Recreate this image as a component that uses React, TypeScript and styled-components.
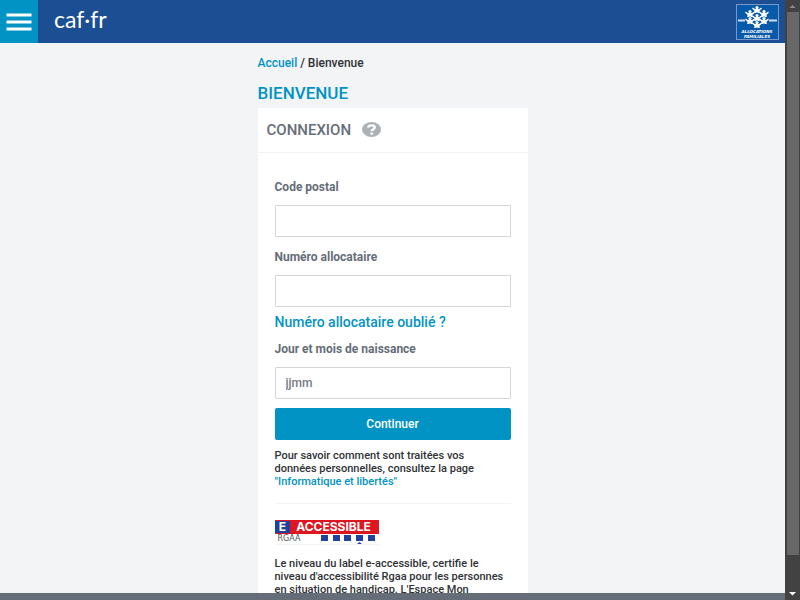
import React from "react";
import styled, { createGlobalStyle } from "styled-components";

const GlobalStyle = createGlobalStyle`
  *, *::before, *::after { box-sizing: border-box; }
  body { margin: 0; background: #f2f4f6; font-family: Roboto, "Liberation Sans", sans-serif; color: #2f3236; }
  h1, h2, p { margin: 0; }
  a { color: #0093c4; text-decoration: none; }
`;

const Shell = styled.div`
  display: grid;
  grid-template-columns: minmax(0, 1fr) 15px;
  height: 100vh;
`;

const Viewport = styled.div`
  display: flex;
  flex-direction: column;
  min-height: 0;
`;

const Header = styled.header`
  display: flex;
  flex: none;
  align-items: center;
  height: 43px;
  background: #1c4e93;
`;

const MenuButton = styled.button`
  display: flex;
  align-items: center;
  justify-content: center;
  width: 38px;
  height: 43px;
  padding: 0;
  border: 0;
  background: #0093c4;
`;

const Brand = styled.a`
  margin: 0 auto 5px 16px;
  color: #fff;
  font-family: Lato, sans-serif;
  font-size: 23px;
  line-height: 28px;
`;

const FamilyLogo = styled.svg`
  display: block;
  margin-right: 6px;
`;

const Content = styled.main`
  flex: 1;
  min-height: 0;
  overflow: hidden;
`;

const Column = styled.div`
  width: 100%;
  max-width: 270px;
  margin: 0 auto;
`;

const Breadcrumb = styled.nav`
  padding-top: 12px;
  font-size: 12px;
  font-weight: 500;
  line-height: 16px;
`;

const PageTitle = styled.h1`
  padding: 12px 0 5px;
  color: #0093c4;
  font-size: 17px;
  font-weight: 500;
  line-height: 20px;
`;

const Card = styled.section`
  background: #fff;
`;

const CardHeader = styled.div`
  display: flex;
  align-items: center;
  gap: 11px;
  height: 45px;
  padding: 0 9px;
  border-bottom: 1px solid #f2f4f6;
`;

const CardTitle = styled.h2`
  color: #656d78;
  font-size: 15px;
  font-weight: 500;
  line-height: 20px;
`;

const HelpButton = styled.button`
  display: flex;
  padding: 0;
  border: 0;
  background: none;
`;

const Form = styled.form`
  display: flex;
  flex-direction: column;
  padding: 26px 17px 0;
`;

const Field = styled.div`
  display: flex;
  flex-direction: column;
  gap: 10px;
  margin-bottom: 12px;
`;

const Label = styled.label`
  color: #656d78;
  font-size: 12px;
  font-weight: 700;
  line-height: 16px;
`;

const Input = styled.input`
  width: 100%;
  height: 32px;
  padding: 0 10px;
  border: 1px solid #d3d7da;
  border-radius: 1px;
  background: #fff;
  font-family: inherit;
  font-size: 12px;
  font-weight: 500;
  &::placeholder { color: #777c82; opacity: 1; }
`;

const ForgotLink = styled.a`
  margin: -5px 0 11px;
  font-size: 14px;
  font-weight: 500;
  line-height: 16px;
`;

const Submit = styled.button`
  height: 32px;
  margin-top: -3px;
  border: 0;
  border-radius: 2px;
  background: #0093c4;
  color: #fff;
  font-family: inherit;
  font-size: 12px;
  font-weight: 500;
`;

const Note = styled.p`
  font-size: 11px;
  font-weight: 500;
  line-height: 13px;
`;

const Legal = styled.div`
  margin: 0 17px;
  padding: 9px 0 15px;
  border-bottom: 1px solid #f2f4f6;
`;

const Accessibility = styled.div`
  display: flex;
  flex-direction: column;
  gap: 12px;
  padding: 16px 17px;
`;

const Badge = styled.div`
  width: 104px;
  border-bottom: 1px solid #f2f4f6;
`;

const BadgeTop = styled.div`
  display: flex;
  height: 14px;
  border: 1px solid #dc1721;
  border-left-color: #20429c;
  border-radius: 1px;
  overflow: hidden;
  color: #fff;
  font-family: Inter, sans-serif;
  font-size: 12px;
  font-weight: 700;
  line-height: 12px;
`;

const BadgeLetter = styled.span`
  width: 14px;
  background: #20429c;
  text-align: center;
`;

const BadgeWord = styled.span`
  flex: 1;
  background: #dc1721;
  text-align: center;
`;

const BadgeBottom = styled.div`
  display: flex;
  align-items: center;
  justify-content: space-between;
  height: 10px;
  padding: 0 3px;
  color: #50545a;
  font-family: "DejaVu Sans", sans-serif;
  font-size: 8px;
  line-height: 10px;
`;

const BottomBar = styled.footer`
  flex: none;
  height: 7px;
  background: #656d78;
`;

const Scrollbar = styled.div`
  display: flex;
  flex-direction: column;
  align-items: center;
  background: #424242;
`;

const Arrow = styled.svg`
  display: block;
  flex: none;
`;

const Thumb = styled.div`
  flex: 543 1 0;
  width: 12px;
  background: #686868;
`;

const Track = styled.div`
  flex: 33 1 0;
`;

const people = [
  [21, 2], [14, 6], [28, 6], [21, 10], [14, 13], [28, 13], [21, 17],
];

const Family = () => (
  <FamilyLogo width="43" height="36" viewBox="0 0 43 36" role="img" aria-label="Allocations familiales">
    <rect x="0.5" y="0.5" width="42" height="35" fill="#0759a9" stroke="#7899c5" />
    <path d="M2 16.5H9M33 16.5H41" stroke="#d6dcf3" strokeWidth="2" />
    {people.map(([x, y]) => (
      <g key={`${x}-${y}`} transform={`translate(${x} ${y})`} fill="#fff">
        <circle cx="0" cy="1.5" r="1.6" />
        <path d="M-4.4 1.4L-2 3H2L4.4 1.4L4.8 2.8L2.5 4.8L2.8 7H0.8L0 6L-0.8 7H-2.8L-2.5 4.8L-4.8 2.8Z" />
      </g>
    ))}
    <g fill="#fff" fontFamily="DejaVu Sans, sans-serif" fontSize="4" fontStyle="italic" fontWeight="700" textAnchor="middle">
      <text x="21" y="29">ALLOCATIONS</text>
      <text x="21" y="34">FAMILIALES</text>
    </g>
  </FamilyLogo>
);

export default function App() {
  return (
    <>
      <GlobalStyle />
      <Shell>
        <Viewport>
          <Header>
            <MenuButton type="button" aria-label="Menu">
              <svg width="26" height="18" viewBox="0 0 26 18">
                <path d="M2 2H24M2 9H24M2 16H24" stroke="#fff" strokeWidth="3" strokeLinecap="square" />
              </svg>
            </MenuButton>
            <Brand href="#">caf·fr</Brand>
            <Family />
          </Header>
          <Content>
            <Column>
              <Breadcrumb aria-label="Fil d'Ariane"><a href="#">Accueil</a> / Bienvenue</Breadcrumb>
              <PageTitle>BIENVENUE</PageTitle>
              <Card>
                <CardHeader>
                  <CardTitle>CONNEXION</CardTitle>
                  <HelpButton type="button" aria-label="Aide">
                    <svg width="19" height="16" viewBox="0 0 19 16">
                      <ellipse cx="9.5" cy="7.5" rx="9.5" ry="7.5" fill="#aab2b7" />
                      <path d="M6.2 5.6C6.4 2.6 13 2.6 12.8 5.5C12.7 7.4 9.7 7.2 9.7 9.2" fill="none" stroke="#fff" strokeWidth="2.4" />
                      <ellipse cx="9.7" cy="11.6" rx="1.5" ry="1.2" fill="#fff" />
                    </svg>
                  </HelpButton>
                </CardHeader>
                <Form>
                  <Field>
                    <Label htmlFor="postal">Code postal</Label>
                    <Input id="postal" type="text" />
                  </Field>
                  <Field>
                    <Label htmlFor="number">Numéro allocataire</Label>
                    <Input id="number" type="text" />
                  </Field>
                  <ForgotLink href="#">Numéro allocataire oublié ?</ForgotLink>
                  <Field>
                    <Label htmlFor="birth">Jour et mois de naissance</Label>
                    <Input id="birth" type="text" placeholder="jjmm" />
                  </Field>
                  <Submit type="submit">Continuer</Submit>
                </Form>
                <Legal>
                  <Note>
                    Pour savoir comment sont traitées vos<br />
                    données personnelles, consultez la page<br />
                    <a href="#">"Informatique et libertés"</a>
                  </Note>
                </Legal>
                <Accessibility>
                  <Badge>
                    <BadgeTop>
                      <BadgeLetter>E</BadgeLetter>
                      <BadgeWord>ACCESSIBLE</BadgeWord>
                    </BadgeTop>
                    <BadgeBottom>
                      RGAA
                      <svg width="55" height="10" viewBox="0 0 55 10" aria-hidden="true">
                        <path d="M0 1h7v6H0zM12 1h7v6h-7zM23 1h7v6h-7zM35 1h7v6h-7zM47 1h7v6h-7zM36 10L38.5 8L41 10z" fill="#20429c" />
                      </svg>
                    </BadgeBottom>
                  </Badge>
                  <Note>
                    Le niveau du label e-accessible, certifie le<br />
                    niveau d'accessibilité Rgaa pour les personnes<br />
                    en situation de handicap. L'Espace Mon
                  </Note>
                </Accessibility>
              </Card>
            </Column>
          </Content>
          <BottomBar />
        </Viewport>
        <Scrollbar aria-hidden="true">
          <Arrow width="15" height="12" viewBox="0 0 15 12"><path d="M4.5 8L7.5 5L10.5 8Z" fill="#8c8c8c" /></Arrow>
          <Thumb />
          <Track />
          <Arrow width="15" height="12" viewBox="0 0 15 12"><path d="M4 4L7.5 7.5L11 4Z" fill="#fff" /></Arrow>
        </Scrollbar>
      </Shell>
    </>
  );
}
